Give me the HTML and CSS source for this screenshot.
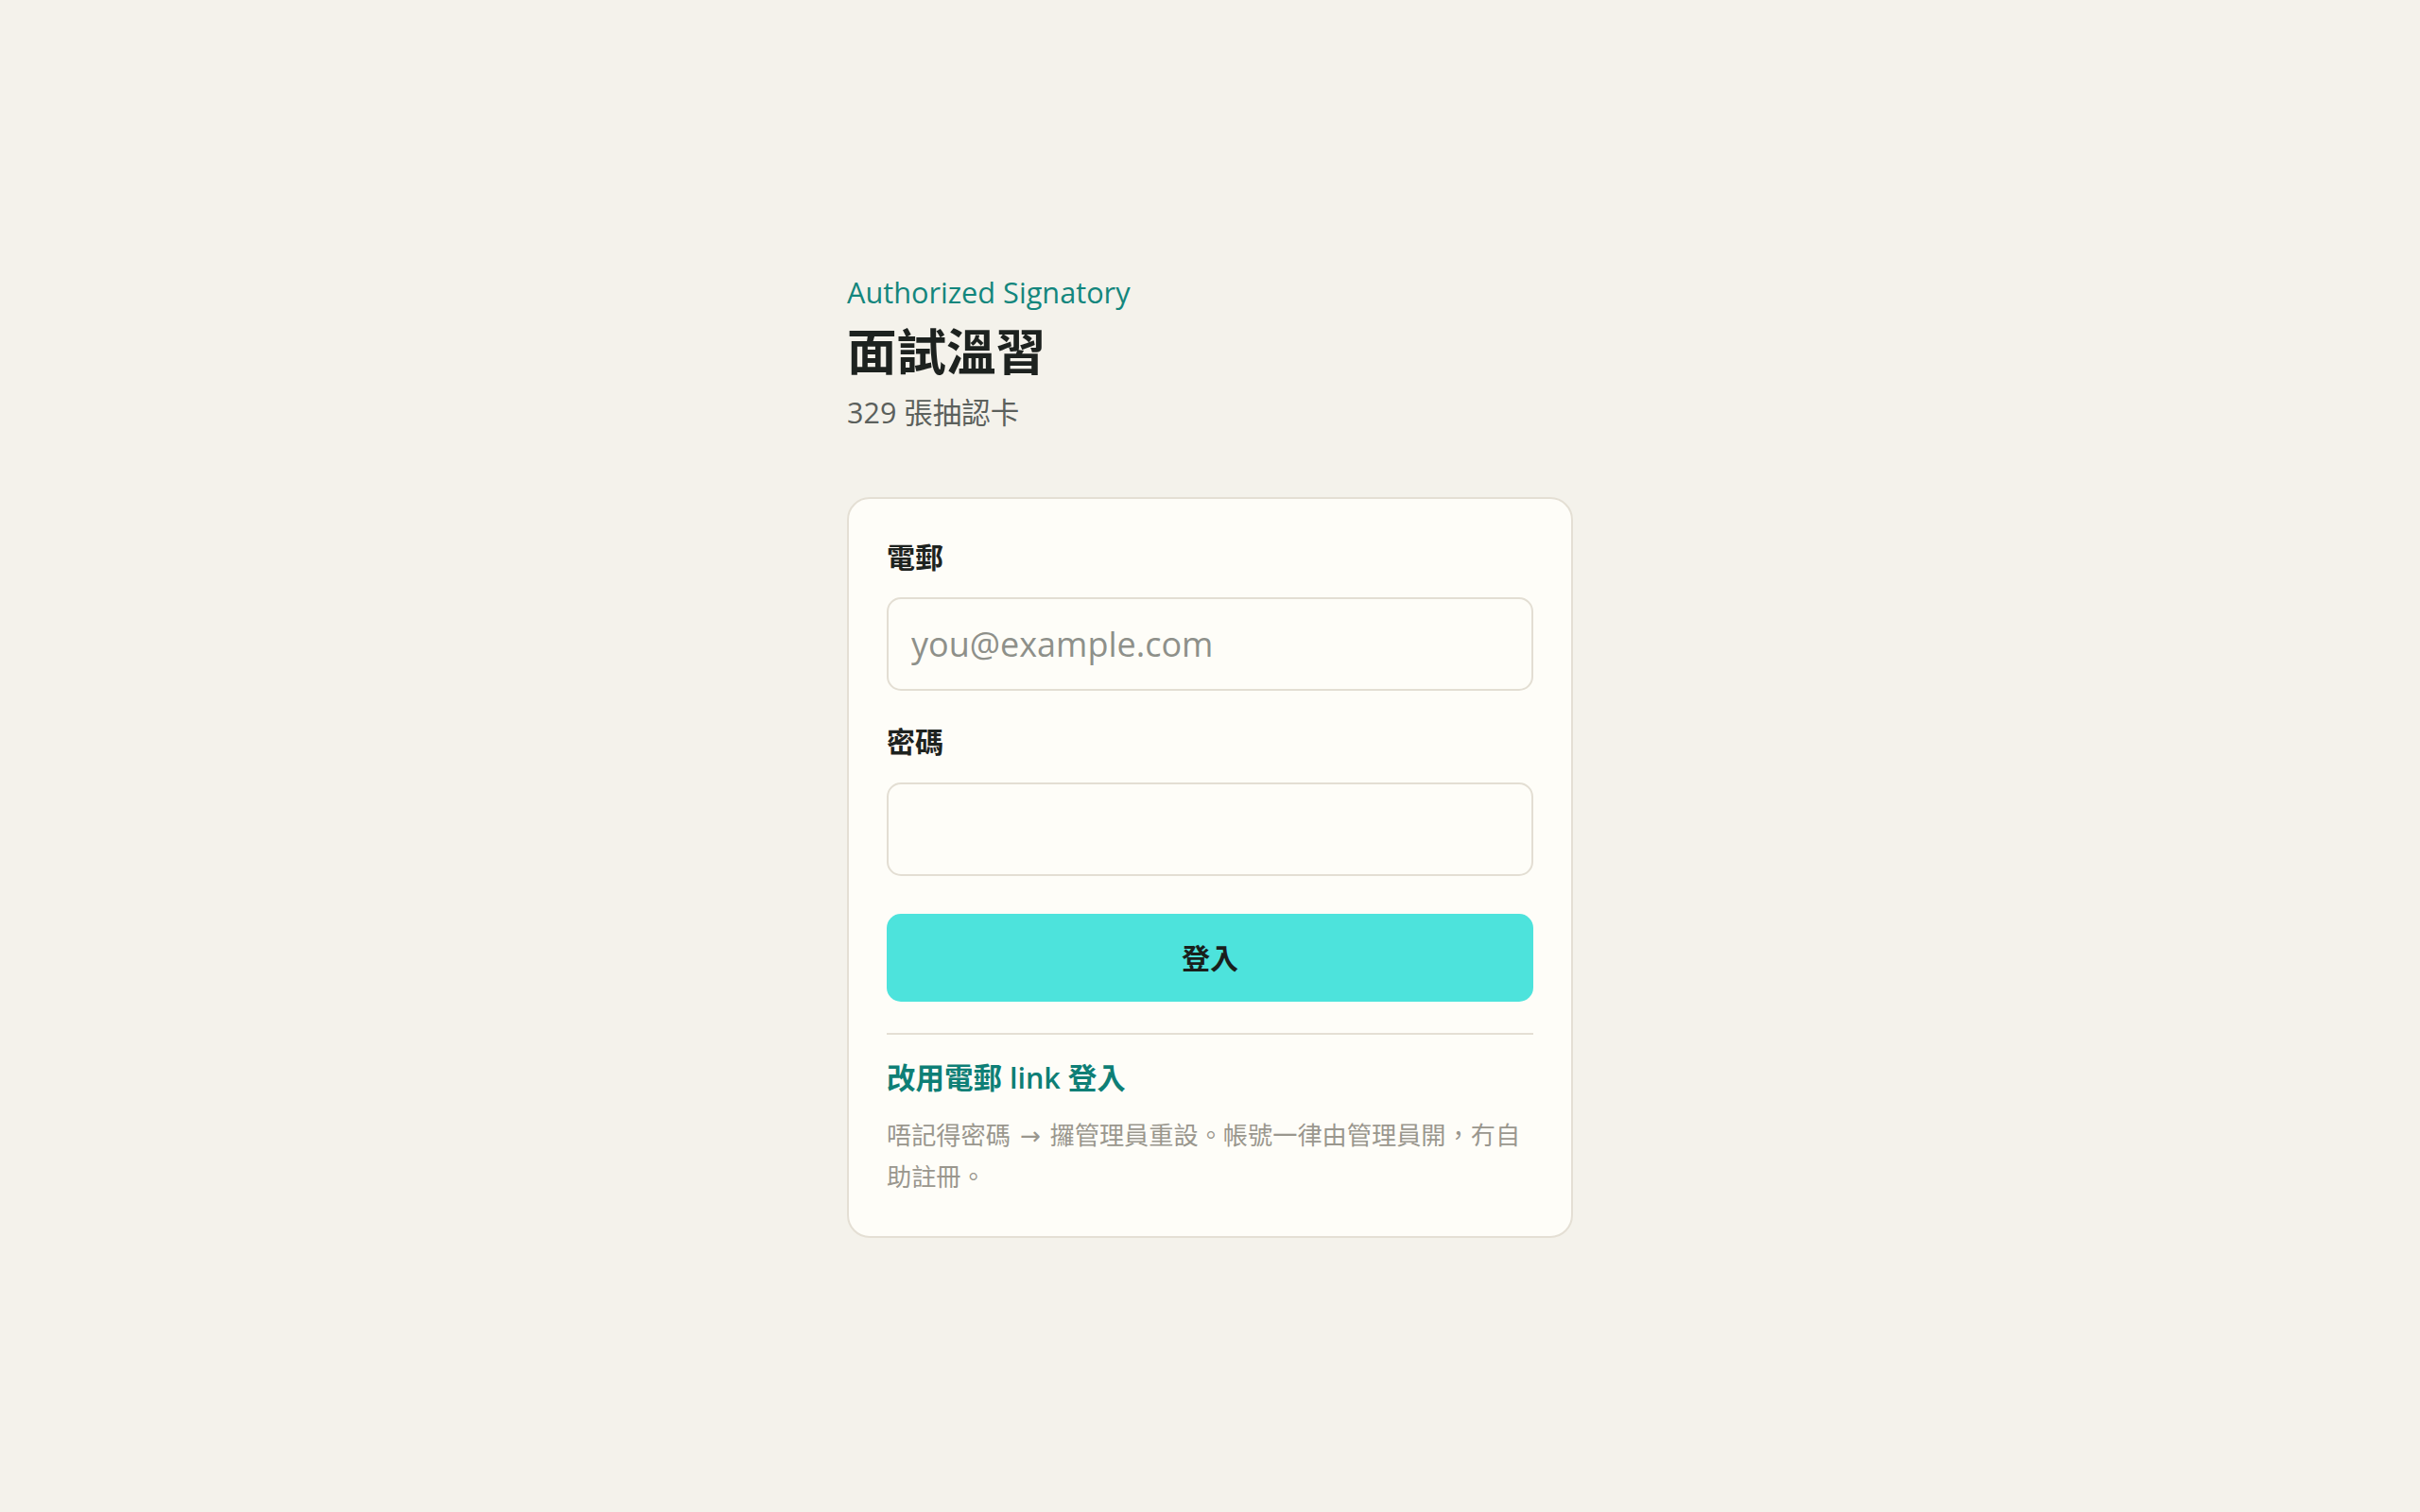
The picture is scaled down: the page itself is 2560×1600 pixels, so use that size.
FILE: index.html
```html
<!DOCTYPE html>
<html lang="zh-Hant">
<head>
<meta charset="utf-8">
<title>面試溫習 · 登入</title>
<link rel="stylesheet" href="styles.css">
</head>
<body>
<main class="page">
  <div class="wrap">
    <header class="intro">
      <p class="eyebrow">Authorized Signatory</p>
      <h1 class="title">面試溫習</h1>
      <p class="count">329 張抽認卡</p>
    </header>
    <form class="card" onsubmit="return false">
      <label class="field-label" for="email">電郵</label>
      <input class="field" id="email" type="email" placeholder="you@example.com">
      <label class="field-label field-label-next" for="pw">密碼</label>
      <input class="field" id="pw" type="password">
      <button class="submit" type="submit">登入</button>
      <hr class="divider">
      <a class="alt-link" href="#">改用電郵 link 登入</a>
      <p class="help">唔記得密碼 <span class="arrow">→</span> 攞管理員重設。帳號一律由管理員開，冇自助註冊。</p>
    </form>
  </div>
</main>
</body>
</html>
```
FILE: styles.css
```css
* { box-sizing: border-box; }

html, body {
  margin: 0;
  padding: 0;
}

body {
  background: #f4f2eb;
  font-family: "Open Sans", "Noto Sans CJK TC", sans-serif;
  color: #1e2320;
  min-height: 100vh;
}

.page {
  padding-top: 286px;
  padding-bottom: 200px;
}

.wrap {
  width: 768px;
  margin: 0 auto;
}

.intro p, .intro h1 { margin: 0; }

.eyebrow {
  font-size: 30.7px;
  line-height: 46px;
  color: #13867d;
  font-weight: 400;
}

.title {
  margin-top: 8px !important;
  font-size: 52.5px;
  line-height: 64px;
  font-weight: 700;
  color: #1d221f;
}

.count {
  margin-top: 11px !important;
  font-size: 30.5px;
  line-height: 43.2px;
  color: #5b605c;
}

.card {
  margin-top: 68px;
  background: #fefdf8;
  border: 2px solid #e4dfd4;
  border-radius: 24px;
  padding: 40px;
  display: flex;
  flex-direction: column;
}

.field-label {
  font-size: 30px;
  line-height: 43.2px;
  font-weight: 600;
  color: #1e2320;
  margin-bottom: 21px;
}

.field-label-next { margin-top: 32px; }

.field {
  display: block;
  width: 100%;
  height: 99px;
  border: 2px solid #e3ded3;
  border-radius: 15px;
  background: #fefdf8;
  padding: 0 24px;
  font-family: "Open Sans", "Noto Sans CJK TC", sans-serif;
  font-size: 36px;
  color: #1e2320;
  outline: none;
}

.field::placeholder { color: #8e908a; }

.submit {
  margin-top: 40px;
  height: 93px;
  border: 0;
  border-radius: 15px;
  background: #4de3dc;
  color: #1a1f1c;
  font-family: "Open Sans", "Noto Sans CJK TC", sans-serif;
  font-size: 30px;
  font-weight: 600;
  padding: 0 0 2px;
  cursor: pointer;
}

.divider {
  margin: 33px 0 0;
  border: 0;
  height: 2px;
  background: #e4dfd4;
}

.alt-link {
  display: block;
  margin-top: 24px;
  font-size: 30.5px;
  line-height: 43.2px;
  font-weight: 600;
  color: #0e7f76;
  text-decoration: none;
}

.help {
  margin: 18px 0 0;
  font-size: 26.2px;
  line-height: 43.5px;
  color: #9a978e;
}

.arrow {
  margin: 0 3px;
  font-family: "DejaVu Sans", sans-serif;
}
```
